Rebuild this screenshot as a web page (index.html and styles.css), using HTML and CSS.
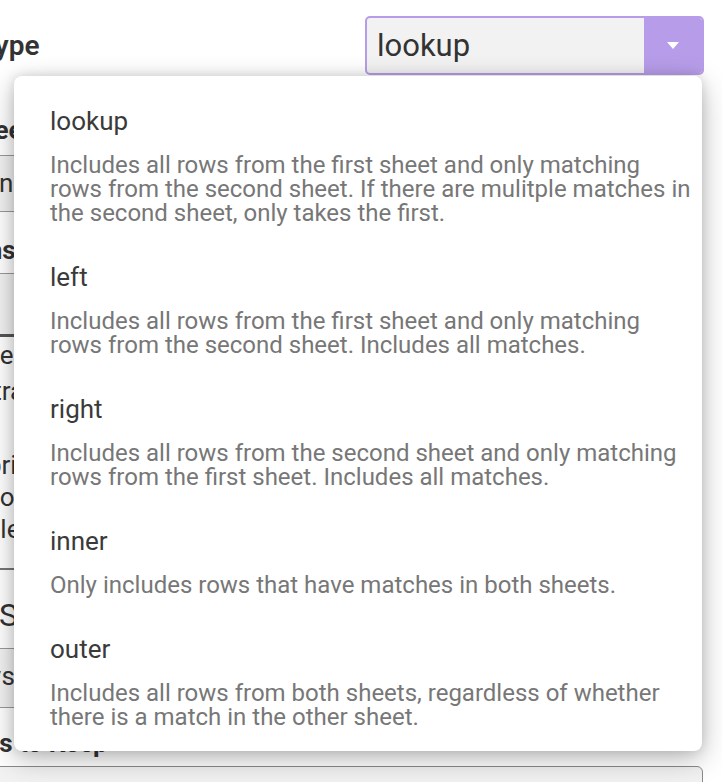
FILE: index.html
```html
<!DOCTYPE html>
<html lang="en">
<head>
<meta charset="utf-8">
<title>Join Type</title>
<link rel="stylesheet" href="styles.css">
</head>
<body>
<div class="page">
  <div class="row-type">
    <div class="field-label label-type">Join Type</div>
    <div class="select">
      <span class="select-value">lookup</span>
      <span class="select-btn"><svg width="12" height="7" viewBox="0 0 12 7"><path d="M0 0H12L6 7Z" fill="#fff"/></svg></span>
    </div>
  </div>
  <div class="field-label label-sheet">Sheet</div>
  <div class="input input-one">Once</div>
  <div class="field-label label-cols">Columns</div>
  <div class="input input-dark"></div>
  <div class="para">
    <div class="para-block para-a">
      <p>The</p>
      <p>Ultra</p>
    </div>
    <div class="para-block para-b">
      <p>April</p>
      <p>Shot</p>
      <p>Title</p>
    </div>
  </div>
  <div class="heading">Sheets</div>
  <div class="input input-s">Rows</div>
  <div class="field-label label-keep">Columns to Keep</div>
  <div class="input input-last"></div>
</div>

<div class="menu">
  <div class="option">
    <div class="option-title">lookup</div>
    <div class="option-desc">Includes all rows from the first sheet and only matching rows from the second sheet. If there are mulitple matches in the second sheet, only takes the first.</div>
  </div>
  <div class="option">
    <div class="option-title">left</div>
    <div class="option-desc">Includes all rows from the first sheet and only matching rows from the second sheet. Includes all matches.</div>
  </div>
  <div class="option">
    <div class="option-title">right</div>
    <div class="option-desc">Includes all rows from the second sheet and only matching rows from the first sheet. Includes all matches.</div>
  </div>
  <div class="option">
    <div class="option-title">inner</div>
    <div class="option-desc">Only includes rows that have matches in both sheets.</div>
  </div>
  <div class="option">
    <div class="option-title">outer</div>
    <div class="option-desc">Includes all rows from both sheets, regardless of whether there is a match in the other sheet.</div>
  </div>
</div>
</body>
</html>
```

FILE: styles.css
```css
html, body {
  margin: 0;
  padding: 0;
  background: #ffffff;
  overflow: hidden;
  font-family: Roboto, "Liberation Sans", sans-serif;
  color: #333;
}

.page {
  margin-left: -78px;
  padding: 16px 18px 0 0;
  height: 782px;
  box-sizing: border-box;
  overflow: hidden;
}

.row-type {
  display: flex;
  align-items: center;
  justify-content: space-between;
  height: 59px;
}

.field-label {
  font-size: 26px;
  font-weight: 700;
  line-height: 30px;
  color: #333;
}

.label-type {
  font-size: 28px;
  font-weight: 600;
  margin-left: -4px;
}

.select {
  width: 339px;
  height: 59px;
  box-sizing: border-box;
  border: 2px solid #b79de9;
  border-radius: 5px;
  background: #f2f2f2;
  display: flex;
  overflow: hidden;
}

.select-value {
  flex: 1;
  padding-left: 10px;
  font-size: 31px;
  line-height: 55px;
  color: #333;
}

.select-btn {
  width: 58px;
  background: #b79de9;
  display: flex;
  align-items: center;
  justify-content: center;
}

.label-sheet {
  margin-top: 40px;
  margin-left: 42px;
}

.input {
  height: 57px;
  box-sizing: border-box;
  margin-right: 14px;
  border: 1px solid #9a9a9a;
  border-radius: 4px;
  background: #f2f2f2;
  font-size: 26px;
  line-height: 55px;
  color: #333;
}

.input-one {
  margin-top: 10px;
  padding-left: 58px;
}

.label-cols {
  margin-top: 23px;
  margin-left: -10px;
}

.input-dark {
  margin-top: 8px;
  height: 64px;
  border-bottom: 3px solid #555;
}

.para {
  height: 233px;
  box-sizing: border-box;
  border-bottom: 2px solid #777;
  margin-left: 48px;
  margin-right: 14px;
}

.para p {
  margin: 0;
  font-size: 26px;
  color: #333;
}

.para-a p {
  line-height: 36px;
}

.para-b {
  margin-top: 40px;
}

.para-b p {
  line-height: 32px;
}

.heading {
  margin-top: 28px;
  margin-left: 77px;
  font-size: 32px;
  line-height: 34px;
  color: #333;
}

.input-s {
  margin-top: 16px;
  height: 60px;
  padding-left: 28px;
}

.label-keep {
  margin-top: 20px;
  margin-left: -13px;
}

.input-last {
  margin-top: 8px;
  margin-right: 1px;
  height: 30px;
  border-color: #8a8a8a;
  border-radius: 6px;
}

.menu {
  position: absolute;
  left: 14px;
  top: 76px;
  width: 688px;
  box-sizing: border-box;
  background: #ffffff;
  border-radius: 8px;
  box-shadow: 0 8px 28px rgba(0, 0, 0, 0.28), 0 0 12px rgba(0, 0, 0, 0.12);
  padding: 11px 0 4px;
}

.option {
  padding: 19px 8px 18px 36px;
}

.option-title {
  font-size: 26px;
  line-height: 30px;
  color: #3a3a3a;
  margin-bottom: 17px;
}

.option-desc {
  font-size: 24px;
  line-height: 24px;
  color: #777777;
}
```
